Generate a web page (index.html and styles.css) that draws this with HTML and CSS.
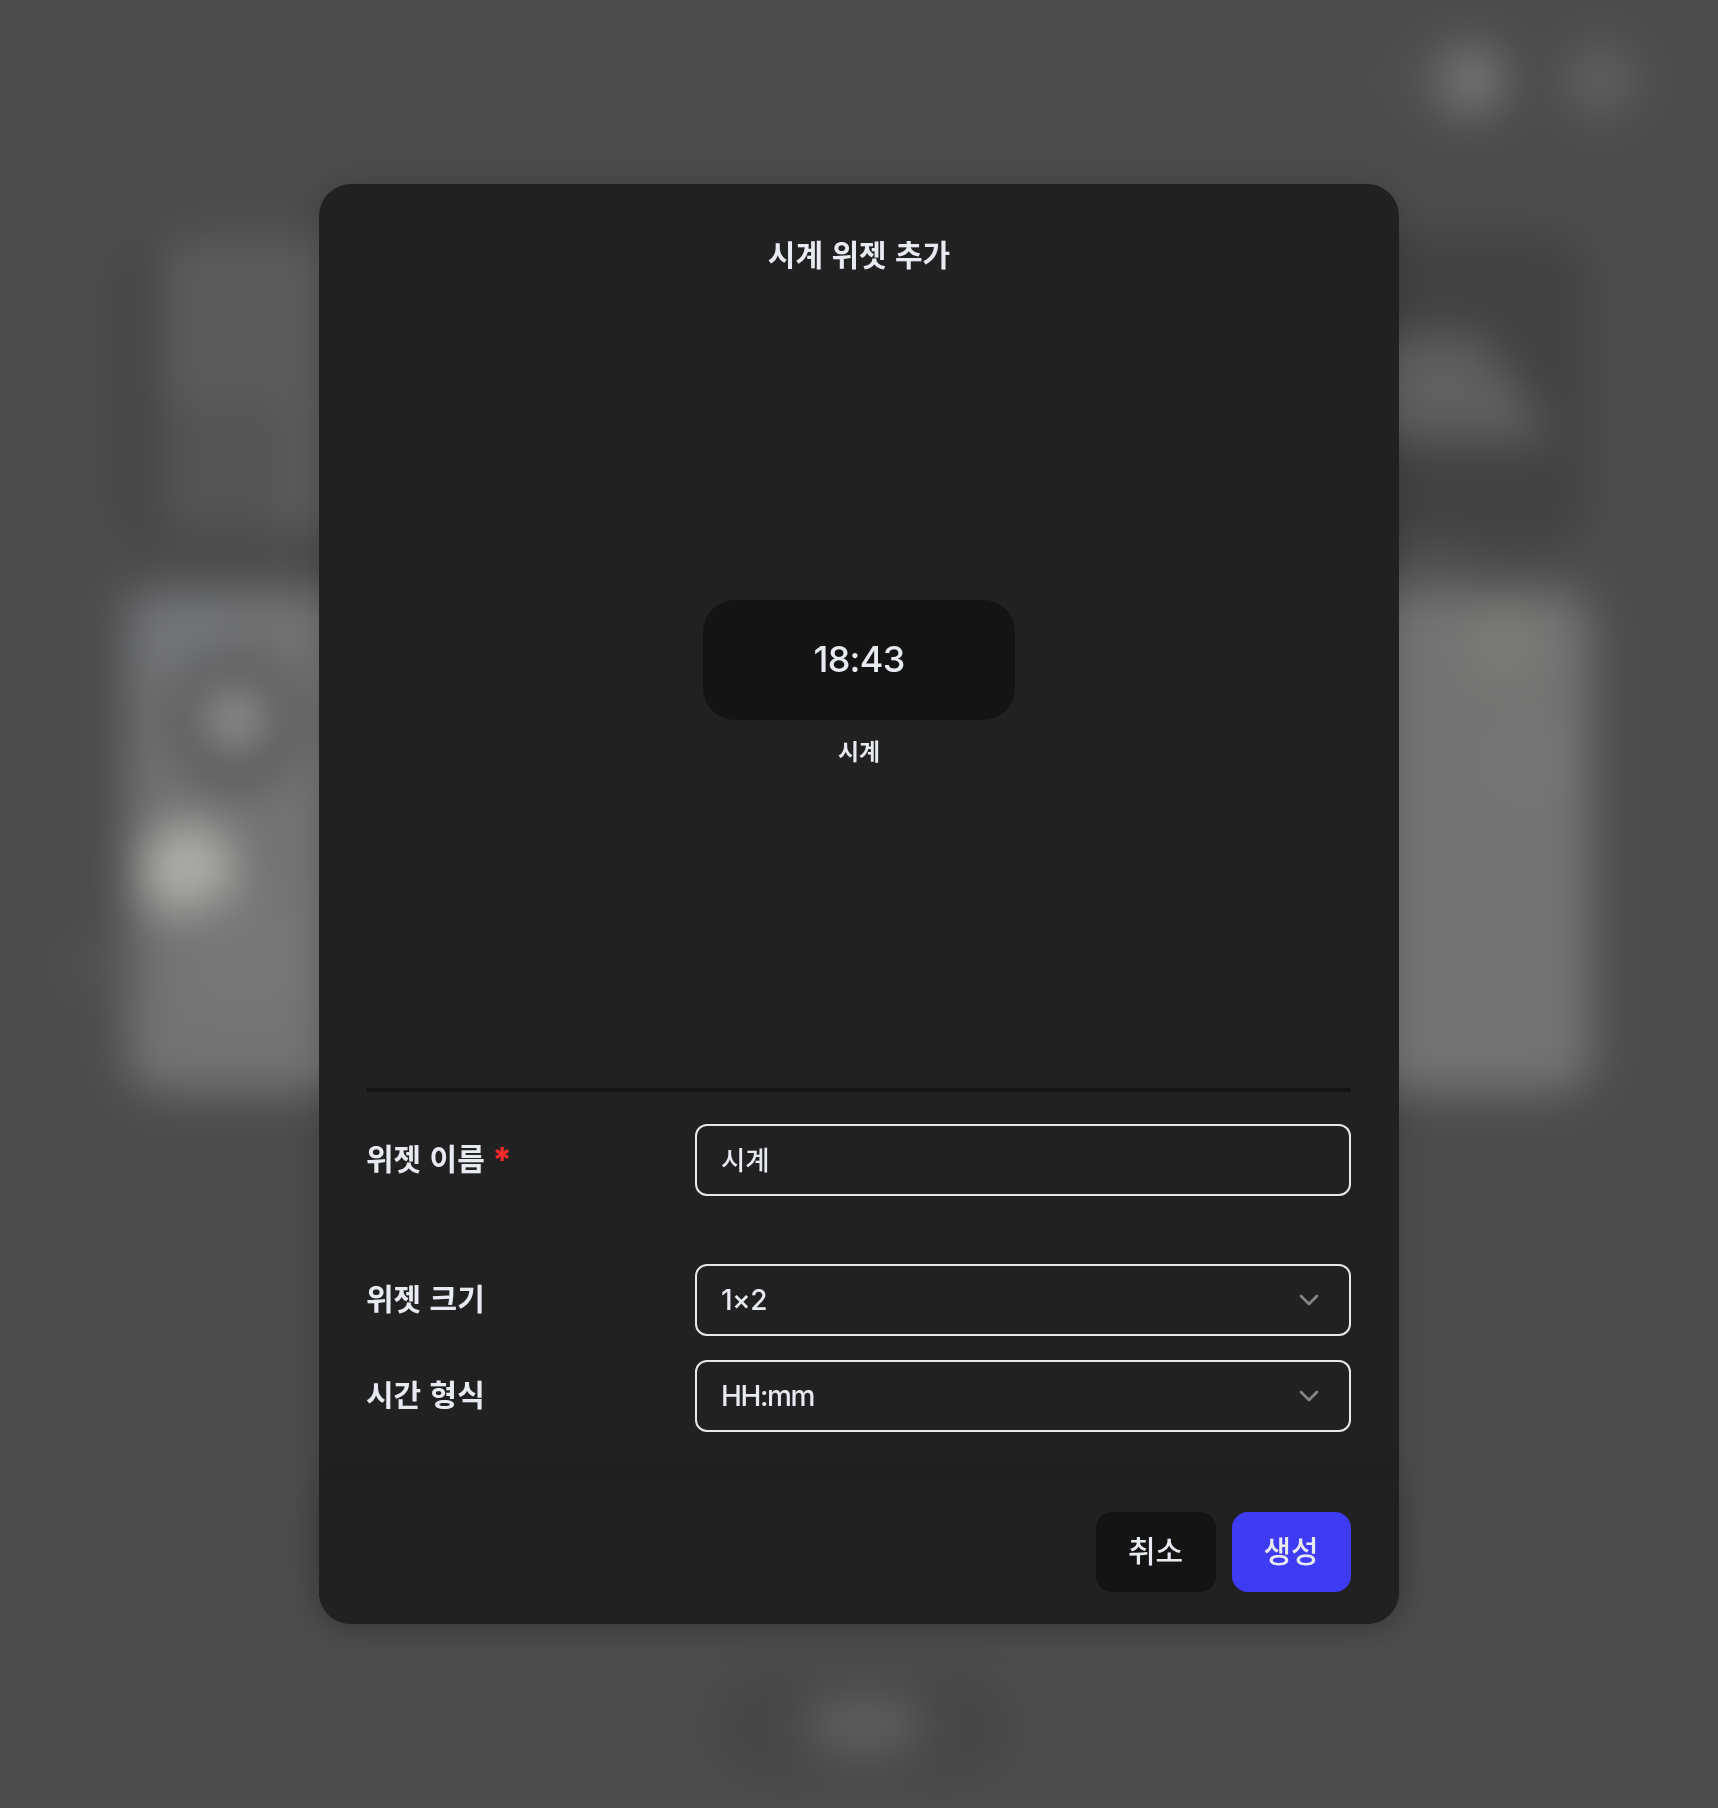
FILE: index.html
```html
<!DOCTYPE html>
<html lang="ko">
<head>
<meta charset="utf-8">
<title>시계 위젯 추가</title>
<link rel="stylesheet" href="styles.css">
</head>
<body>
<svg class="backdrop" viewBox="0 0 1718 1808" aria-hidden="true">
  <defs>
    <filter id="soft" x="0" y="0" width="1718" height="1808" filterUnits="userSpaceOnUse" color-interpolation-filters="sRGB">
      <feGaussianBlur stdDeviation="22"/>
    </filter>
  </defs>
  <g filter="url(#soft)">
    <rect x="-100" y="-100" width="1918" height="2008" fill="#4c4c4c"/>
    <circle cx="1469" cy="80" r="35" fill="#767676"/>
    <rect x="1405" y="62" width="42" height="34" fill="#555"/>
    <circle cx="1600" cy="80" r="36" fill="#5f5f5f"/>
    <rect x="122" y="234" width="1466" height="314" rx="44" fill="#424242"/>
    <rect x="158" y="238" width="240" height="300" rx="16" fill="#5a5b5a"/>
    <rect x="158" y="400" width="125" height="138" rx="16" fill="#545454"/>
    <path d="M1340 336h140l36 52 38 52h-214z" fill="#5f605f"/>
    <rect x="1395" y="545" width="75" height="30" fill="#545454"/>
    <rect x="127" y="590" width="1465" height="502" rx="36" fill="#737373"/>
    <rect x="127" y="597" width="110" height="70" fill="#737579"/>
    <circle cx="235" cy="721" r="66" fill="#525252"/>
    <circle cx="235" cy="719" r="38" fill="#8a8a8a"/>
    <circle cx="188" cy="870" r="48" fill="#acaca9"/>
    <rect x="80" y="944" width="56" height="42" fill="#555"/>
    <rect x="190" y="900" width="110" height="110" fill="#777"/>
    <circle cx="1504" cy="645" r="34" fill="#7c7c76"/>
    <circle cx="1530" cy="760" r="36" fill="#767676"/>
    <rect x="710" y="1670" width="304" height="112" rx="56" fill="#464646"/>
    <rect x="808" y="1694" width="112" height="62" rx="24" fill="#5b5c5b"/>
  </g>
</svg>
<main class="stage">
  <form class="modal">
    <h1 class="modal-title">시계 위젯 추가</h1>
    <section class="preview">
      <div class="clock">18:43</div>
      <div class="caption">시계</div>
    </section>
    <section class="fields">
      <div class="field field-name">
        <span class="label">위젯 이름 <span class="required">*</span></span>
        <div class="control hangul">시계</div>
      </div>
      <div class="field">
        <span class="label">위젯 크기</span>
        <div class="control"><span class="latin size">1×2</span>
          <svg class="chevron" viewBox="0 0 20 12"><path d="M2 2l8 8 8-8"/></svg>
        </div>
      </div>
      <div class="field">
        <span class="label">시간 형식</span>
        <div class="control"><span class="latin format">HH:mm</span>
          <svg class="chevron" viewBox="0 0 20 12"><path d="M2 2l8 8 8-8"/></svg>
        </div>
      </div>
    </section>
    <footer class="actions">
      <button type="button" class="btn cancel">취소</button>
      <button type="button" class="btn create">생성</button>
    </footer>
  </form>
</main>
</body>
</html>
```

FILE: styles.css
```css
* {
  box-sizing: border-box;
}

body {
  margin: 0;
  background: #4c4c4c;
  color: #e8eaf1;
  font-family: "Noto Sans CJK KR", sans-serif;
}

.backdrop {
  position: fixed;
  inset: 0;
  width: 1718px;
  height: 1808px;
}

.stage {
  position: relative;
  display: flex;
  align-items: center;
  justify-content: center;
  height: 1808px;
}

.modal {
  display: flex;
  flex-direction: column;
  width: 1080px;
  height: 1440px;
  border-radius: 32px;
  background: #212121;
  box-shadow: 0 0 32px rgba(0, 0, 0, 0.16);
}

.modal-title {
  margin: 0;
  padding: 47px 0 1px;
  font-size: 30px;
  font-weight: 600;
  line-height: 44px;
  text-align: center;
}

.preview {
  display: flex;
  flex: 1;
  flex-direction: column;
  align-items: center;
  padding-top: 324px;
}

.clock {
  display: flex;
  align-items: center;
  justify-content: center;
  width: 312px;
  height: 120px;
  padding-bottom: 2px;
  border-radius: 32px;
  background: #141414;
  font-family: Inter, sans-serif;
  font-size: 36px;
  font-weight: 500;
  letter-spacing: -0.7px;
}

.caption {
  margin-top: 14px;
  font-size: 22.8px;
  font-weight: 600;
  line-height: 34px;
}

.fields {
  display: flex;
  flex-direction: column;
  gap: 24px;
  margin: 0 48px;
  padding: 32px 0 48px;
  border-top: 4px solid #141414;
}

.field {
  display: grid;
  grid-template-columns: 1fr 2fr;
  align-items: center;
}

.field-name {
  margin-bottom: 44px;
}

.label {
  padding-bottom: 6px;
  margin-left: -1px;
  font-size: 30px;
  font-weight: 600;
  line-height: 44px;
}

.required {
  color: #fb2c2c;
  font-family: Inter, sans-serif;
  font-size: 34px;
  font-weight: 800;
  line-height: 1;
  vertical-align: -2px;
  margin-left: -1px;
}

.control {
  display: flex;
  align-items: center;
  justify-content: space-between;
  height: 72px;
  padding: 0 30px 0 24px;
  border: 2px solid #e8e8e8;
  border-radius: 12px;
  font-size: 26.4px;
  font-weight: 500;
}

.hangul {
  padding-bottom: 4px;
}

.latin {
  font-family: Inter, sans-serif;
  font-size: 28px;
  font-weight: 450;
}

.size {
  letter-spacing: -0.5px;
}

.format {
  letter-spacing: -1.4px;
}

.chevron {
  width: 20px;
  height: 12px;
  fill: none;
  stroke: #858585;
  stroke-width: 2.6;
  stroke-linecap: round;
  stroke-linejoin: round;
}

.actions {
  display: flex;
  justify-content: flex-end;
  gap: 16px;
  height: 144px;
  padding: 32px 48px;
  border-radius: 0 0 32px 32px;
  background: #212121;
  box-shadow: 0 0 40px rgba(0, 0, 0, 0.18);
}

.btn {
  width: 120px;
  height: 80px;
  padding: 0 1px 6px 0;
  border: 0;
  border-radius: 16px;
  color: inherit;
  font-family: inherit;
  font-size: 30px;
  font-weight: 500;
}

.cancel {
  background: #141414;
}

.create {
  width: 119px;
  background: #3f3bf5;
}
```
